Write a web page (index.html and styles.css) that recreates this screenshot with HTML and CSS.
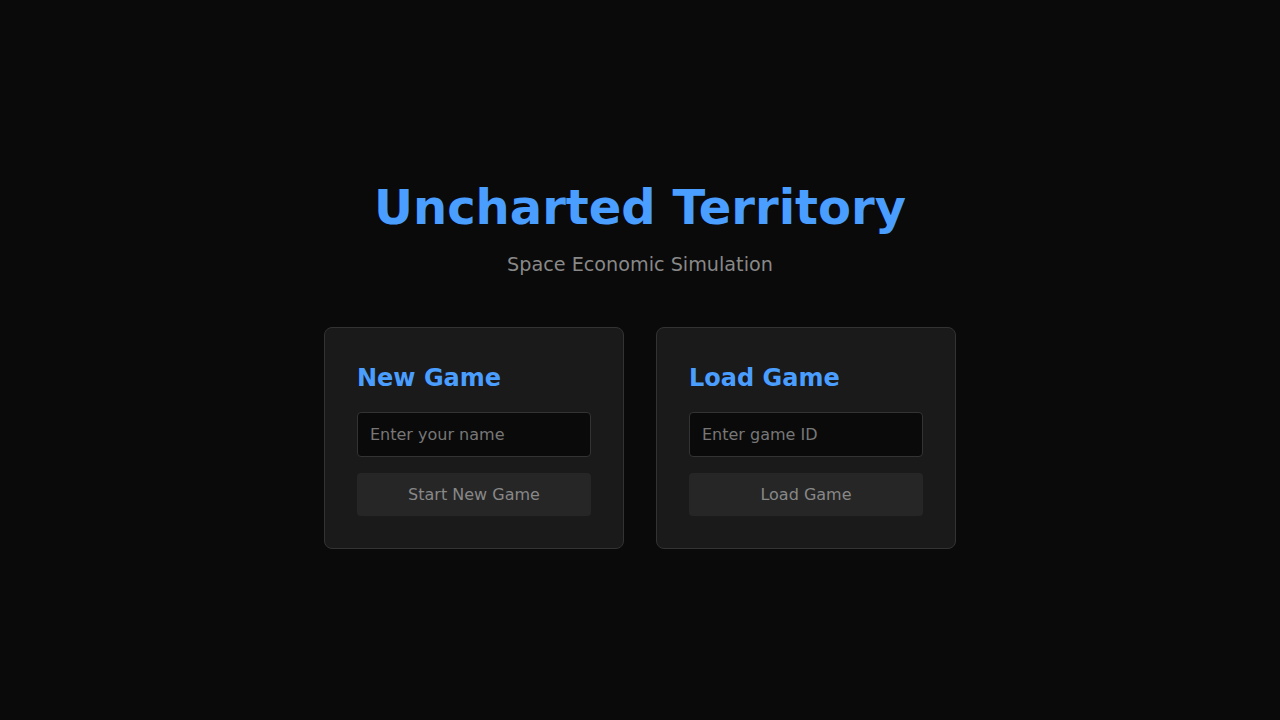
FILE: index.html
```html
<!DOCTYPE html>
<html>
<head>
<meta charset="utf-8">
<link rel="stylesheet" href="styles.css">
</head>
<body>
<main class="screen">
  <header class="intro">
    <h1 class="title">Uncharted Territory</h1>
    <p class="subtitle">Space Economic Simulation</p>
  </header>
  <section class="cards">
    <div class="card">
      <h2 class="card-title">New Game</h2>
      <input class="field" type="text" placeholder="Enter your name">
      <button class="btn" disabled>Start New Game</button>
    </div>
    <div class="card">
      <h2 class="card-title">Load Game</h2>
      <input class="field" type="text" placeholder="Enter game ID">
      <button class="btn" disabled>Load Game</button>
    </div>
  </section>
</main>
</body>
</html>
```
FILE: styles.css
```css
* { box-sizing: border-box; }
html, body { margin: 0; padding: 0; }
body {
  background: #0a0a0a;
  color: #e0e0e0;
  font-family: "DejaVu Sans", sans-serif;
  height: 720px;
}
.screen {
  height: 720px;
  display: flex;
  flex-direction: column;
  align-items: center;
  justify-content: center;
}
.intro { text-align: center; margin: 8px 0 47px; }
.title {
  margin: 0 0 14px;
  font-size: 48px;
  font-weight: bold;
  color: #4a9eff;
  line-height: 57.6px;
}
.subtitle {
  margin: 0;
  font-size: 19.2px;
  line-height: 28.8px;
  color: #888;
}
.cards { display: flex; gap: 32px; }
.card {
  width: 300px;
  background: #1a1a1a;
  border: 1px solid #333;
  border-radius: 8px;
  padding: 32px;
  display: flex;
  flex-direction: column;
  gap: 16px;
}
.card-title {
  margin: 0;
  font-size: 24px;
  font-weight: bold;
  color: #4a9eff;
  line-height: 36px;
}
.field {
  height: 45px;
  padding: 0 12px;
  background: #0a0a0a;
  border: 1px solid #333;
  border-radius: 4px;
  color: #e0e0e0;
  font-family: "DejaVu Sans", sans-serif;
  font-size: 16px;
  outline: none;
}
.field::placeholder { color: #777; }
.btn {
  height: 43px;
  background: #262626;
  border: none;
  border-radius: 4px;
  color: #888;
  font-family: "DejaVu Sans", sans-serif;
  font-size: 16px;
}
```
